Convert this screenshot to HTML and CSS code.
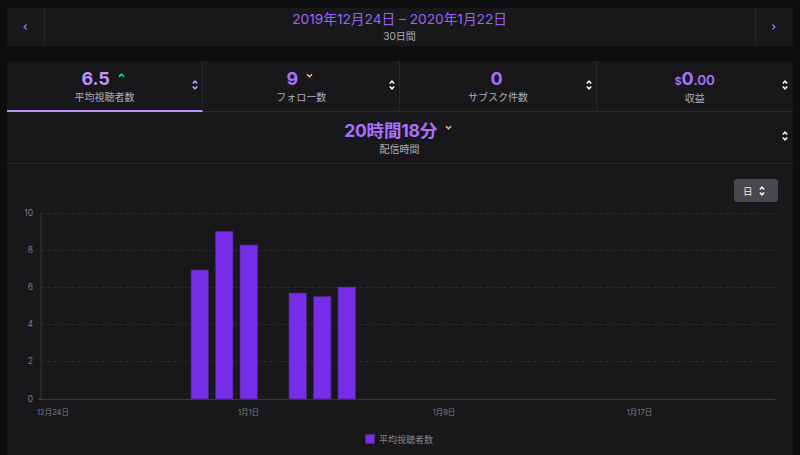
FILE: index.html
```html
<!DOCTYPE html>
<html lang="ja">
<head>
<meta charset="utf-8">
<title>配信統計</title>
<link rel="stylesheet" href="styles.css">
</head>
<body>
<div class="date-bar">
  <div class="nav nav-left"><svg class="chev" viewBox="0 0 6 8"><path d="M4.500 1.500 2.200 4l2.300 2.500"/></svg></div>
  <div class="date-main">
    <div class="date-range">2019年12月24日 – 2020年1月22日</div>
    <div class="date-sub">30日間</div>
  </div>
  <div class="nav nav-right"><svg class="chev" viewBox="0 0 6 8"><path d="M1.500 1.500 3.800 4 1.500 6.500"/></svg></div>
</div>

<main class="panel">
  <div class="tabs">
    <div class="tab active">
      <div class="tab-body">
        <div class="value"><span>6.5</span><svg class="trend up" viewBox="0 0 7 5"><path d="M1 3.800 3.500 1.300 6 3.800"/></svg></div>
        <div class="label">平均視聴者数</div>
      </div>
      <svg class="sort" viewBox="0 0 6 10"><path d="M.8 3.500 3 1.200l2.200 2.300M.8 6.500 3 8.800l2.200-2.300"/></svg>
    </div>
    <div class="tab">
      <div class="tab-body">
        <div class="value"><span>9</span><svg class="trend down" viewBox="0 0 7 5"><path d="M1 1.200 3.500 3.700 6 1.200"/></svg></div>
        <div class="label">フォロー数</div>
      </div>
      <svg class="sort" viewBox="0 0 6 10"><path d="M.8 3.500 3 1.200l2.200 2.300M.8 6.500 3 8.800l2.200-2.300"/></svg>
    </div>
    <div class="tab">
      <div class="tab-body">
        <div class="value"><span>0</span></div>
        <div class="label">サブスク件数</div>
      </div>
      <svg class="sort" viewBox="0 0 6 10"><path d="M.8 3.500 3 1.200l2.200 2.300M.8 6.500 3 8.800l2.200-2.300"/></svg>
    </div>
    <div class="tab">
      <div class="tab-body">
        <div class="value money"><small>$</small><span>0</span><em>.00</em></div>
        <div class="label">収益</div>
      </div>
      <svg class="sort" viewBox="0 0 6 10"><path d="M.8 3.500 3 1.200l2.200 2.300M.8 6.500 3 8.800l2.200-2.300"/></svg>
    </div>
  </div>

  <div class="tab wide">
    <div class="tab-body">
      <div class="value"><span>20時間18分</span><svg class="trend down" viewBox="0 0 7 5"><path d="M1 1.200 3.500 3.700 6 1.200"/></svg></div>
      <div class="label">配信時間</div>
    </div>
    <svg class="sort" viewBox="0 0 6 10"><path d="M.8 3.500 3 1.200l2.200 2.300M.8 6.500 3 8.800l2.200-2.300"/></svg>
  </div>

  <section class="chart-area">
    <div class="toolbar">
      <div class="select"><span>日</span><svg class="sort" viewBox="0 0 6 10"><path d="M.8 3.500 3 1.200l2.200 2.300M.8 6.500 3 8.800l2.200-2.300"/></svg></div>
    </div>
    <svg class="chart" viewBox="0 0 786 291" width="786" height="291">
      <g class="grid">
        <path d="M34 49.500H768M34 86.500H768M34 123.500H768M34 160.500H768M34 197.500H768"/>
      </g>
      <path class="axis" d="M34 49V235.500M31 235.500H768"/>
      <g class="bars">
        <rect x="184" y="106" width="17.500" height="129"/>
        <rect x="208.500" y="67.500" width="17.500" height="167.500"/>
        <rect x="233" y="81" width="17.500" height="154"/>
        <rect x="282" y="129" width="17.500" height="106"/>
        <rect x="306.500" y="132.500" width="17.500" height="102.500"/>
        <rect x="331" y="123" width="17.500" height="112"/>
      </g>
      <g class="ytick">
        <text x="26" y="52">10</text>
        <text x="26" y="89">8</text>
        <text x="26" y="126">6</text>
        <text x="26" y="163">4</text>
        <text x="26" y="200">2</text>
        <text x="26" y="238">0</text>
      </g>
      <g class="xtick">
        <text x="46" y="251">12月24日</text>
        <text x="241.500" y="251">1月1日</text>
        <text x="437" y="251">1月9日</text>
        <text x="632.500" y="251">1月17日</text>
      </g>
      <rect class="legend-box" x="358.500" y="270.500" width="9" height="9"/>
      <text class="legend" x="372" y="278.500">平均視聴者数</text>
    </svg>
  </section>
</main>
</body>
</html>
```

FILE: styles.css
```css
* { box-sizing: border-box; }

html, body { height: 100%; }

body {
  margin: 0;
  height: 455px;
  overflow: hidden;
  padding: 8px 7.500px 0 6.700px;
  background: #0e0e10;
  color: #adadb8;
  font-family: Inter, "Noto Sans CJK JP", sans-serif;
}

.date-bar {
  display: flex;
  height: 38px;
  background: #18181b;
}

.nav {
  flex: 0 0 38px;
  display: flex;
  align-items: center;
  justify-content: center;
}

.nav-left { border-right: 1px solid #26262b; }
.nav-right { border-left: 1px solid #26262b; }

.chev {
  width: 6px;
  height: 8px;
  fill: none;
  stroke: #9a5cf5;
  stroke-width: 1.500;
}

.date-main {
  flex: 1;
  text-align: center;
}

.date-range {
  margin-top: 3px;
  font-size: 13.700px;
  line-height: 17px;
  color: #9b62f7;
}

.date-sub {
  font-size: 10px;
  line-height: 12px;
  margin-top: 2px;
}

.panel {
  margin-top: 15px;
  height: 394px;
  background: #18181b;
}

.tabs {
  display: flex;
  height: 51px;
}

.tab {
  position: relative;
  flex: 1 1 0;
  display: flex;
  align-items: center;
  justify-content: center;
  height: 51px;
  border-right: 1px solid #26262b;
  border-bottom: 1px solid #2a2a2f;
}

.tab:last-child { border-right: 0; }

.tab.active {
  height: 51px;
  border-bottom: 2.500px solid #bf94ff;
}

.tab.wide {
  border-right: 0;
  height: 52px;
}

.tab-body { text-align: center; }

.value {
  display: inline-flex;
  align-items: flex-start;
  gap: 8px;
  padding-right: 3px;
  font-size: 18px;
  line-height: 18px;
  font-weight: 700;
  letter-spacing: -.200px;
  color: #a970ff;
}

.tab.active .value { color: #bf94ff; }

.wide .value { font-size: 17.500px; }

.money { gap: 0; padding-right: 0; align-items: baseline; }

.value small { font-size: 11px; font-weight: 600; }
.value em { font-style: normal; font-size: 13.500px; font-weight: 600; }

.trend {
  width: 7px;
  height: 5px;
  margin-top: 3px;
  fill: none;
  stroke-width: 1.500;
}

.trend.up { stroke: #00f593; }
.trend.down { stroke: #ffbf66; }

.label {
  margin-top: 2px;
  font-size: 10px;
  line-height: 12px;
  color: #adadb8;
}

.sort {
  width: 6px;
  height: 10px;
  fill: none;
  stroke: #efeff1;
  stroke-width: 1.700;
}

.tab > .sort {
  position: absolute;
  right: 4px;
  top: 18.500px;
}

.tab:last-child > .sort,
.tab.wide > .sort { right: 5px; }

.tab.active > .sort { stroke: #bf94ff; }

.chart-area {
  position: relative;
  height: 291px;
}

.toolbar {
  position: absolute;
  top: 15px;
  right: 15px;
}

.select {
  display: flex;
  align-items: center;
  gap: 6px;
  width: 44px;
  height: 23px;
  padding-left: 9.500px;
  border-radius: 3px;
  background: #47474c;
  color: #efeff1;
  font-size: 9.500px;
}

.chart { display: block; }

.grid path {
  fill: none;
  stroke: #2c2c30;
  stroke-width: 1;
  stroke-dasharray: 3.500 2.500;
}

.axis {
  fill: none;
  stroke: #36363b;
  stroke-width: 1;
}

.bars rect {
  fill: #772ce8;
  stroke: #452a78;
  stroke-width: .700;
}

.ytick text {
  font-size: 8.500px;
  fill: #7d7d85;
  text-anchor: end;
}

.xtick text {
  font-size: 7.500px;
  fill: #7d7d85;
  text-anchor: middle;
}

.legend-box {
  fill: #772ce8;
  stroke: #452a78;
}

.legend {
  font-size: 9px;
  fill: #85858d;
}
```
